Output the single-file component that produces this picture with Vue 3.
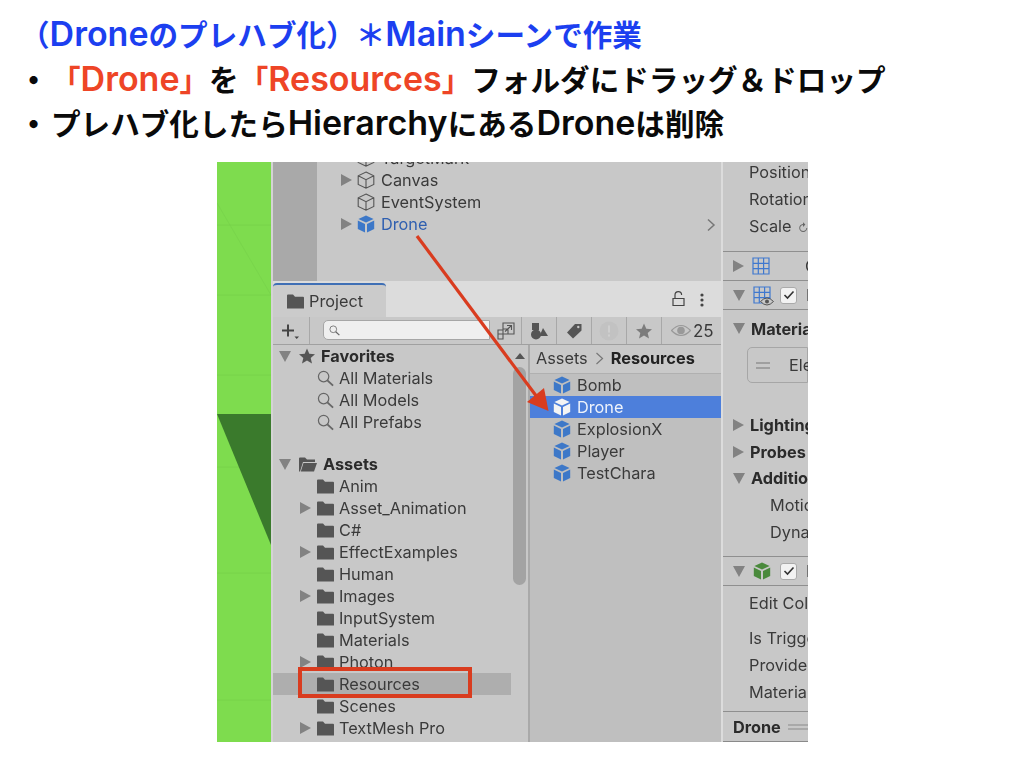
<script setup>
const hierarchy = [
  { name: 'TargetMark' },
  { name: 'Canvas', arrow: true },
  { name: 'EventSystem' },
  { name: 'Drone', arrow: true, prefab: true },
]
const favorites = ['All Materials', 'All Models', 'All Prefabs']
const folders = [
  { name: 'Anim' },
  { name: 'Asset_Animation', arrow: true },
  { name: 'C#' },
  { name: 'EffectExamples', arrow: true },
  { name: 'Human' },
  { name: 'Images', arrow: true },
  { name: 'InputSystem' },
  { name: 'Materials' },
  { name: 'Photon', arrow: true },
  { name: 'Resources', active: true },
  { name: 'Scenes' },
  { name: 'TextMesh Pro', arrow: true },
]
const assets = ['Bomb', 'Drone', 'ExplosionX', 'Player', 'TestChara']
</script>

<template>
  <div class="slide">
    <svg class="defs" width="0" height="0">
      <symbol id="cube" viewBox="0 0 18 18">
        <path d="M9 .5 16.6 4 9 7.6 1.4 4Z" />
        <path d="M.8 5.4 8 8.9V17.6L.8 14Z" />
        <path d="M17.2 5.4 10 8.9V17.6L17.2 14Z" />
      </symbol>
      <symbol id="cube-line" viewBox="0 0 18 18">
        <path d="M9 1 16.8 4.8V13.4L9 17.2 1.2 13.4V4.8ZM1.2 4.8 9 8.700 16.800 4.800M9 8.700V17.200" fill="none" stroke="#555" stroke-width="1.100" />
      </symbol>
      <symbol id="folder" viewBox="0 0 17 15">
        <path d="M0 1.500Q0 .5 1 .5H6L8 2.800H16Q17 2.800 17 3.800V14.500H0Z" fill="#555" />
      </symbol>
      <symbol id="lens" viewBox="0 0 18 18">
        <circle cx="7" cy="7" r="5.500" fill="none" stroke="#666" stroke-width="1.300" />
        <path d="M11 11 17 16.500" stroke="#666" stroke-width="2" />
      </symbol>
      <symbol id="grid" viewBox="0 0 18 18">
        <path d="M1 1H17V17H1ZM1 6.300H17M1 11.600H17M6.300 1V17M11.600 1V17" fill="none" stroke="#3f78cf" stroke-width="1.200" />
      </symbol>
    </svg>

    <header class="notes">
      <h1 class="title">（<span class="lat">Drone</span>のプレハブ化）＊<span class="lat">Main</span>シーンで作業</h1>
      <p class="step">
        <span class="dot">•</span>
        <span><em>「<span class="lat">Drone</span>」</em>を<em>「<span class="lat">Resources</span>」</em>フォルダにドラッグ＆ドロップ</span>
      </p>
      <p class="step">
        <span class="dot">•</span>
        <span>プレハブ化したら<span class="lat">Hierarchy</span>にある<span class="lat">Drone</span>は削除</span>
      </p>
    </header>

    <section class="shot">
      <div class="scene">
        <svg width="54" height="580" viewBox="0 0 54 580">
          <path d="M0 63H54M0 133H54M0 213H54M0 305H54M0 411H54M0 538H54" stroke="#76d04a" stroke-width=".8" />
          <path d="M0 41 54 133" stroke="#76d04a" stroke-width=".6" />
          <path d="M0 252H54V383Z" fill="#3a7a2c" />
        </svg>
      </div>

      <div class="editor">
        <div class="hierarchy">
          <div class="gutter"></div>
          <ul class="hier-list">
            <li v-for="row in hierarchy" :key="row.name" class="hier-row" :class="{ prefab: row.prefab }">
              <i class="tri right" :class="{ off: !row.arrow }"></i>
              <svg class="ico" :class="{ blue: row.prefab }" width="18" height="18"><use :href="row.prefab ? '#cube' : '#cube-line'" /></svg>
              <span>{{ row.name }}</span>
            </li>
          </ul>
          <svg class="chev" width="10" height="14" viewBox="0 0 10 14"><path d="M2 1.500 8 7 2 12.500" fill="none" stroke="#777" stroke-width="1.500" /></svg>
        </div>

        <div class="tabbar">
          <div class="tab">
            <svg width="17" height="15"><use href="#folder" /></svg>
            <span>Project</span>
          </div>
          <svg class="lock" width="13" height="16" viewBox="0 0 13 16"><path d="M3 7.500V4A3.300 3.300 0 0 1 9.600 4M1 7.500H12V14.500H1Z" fill="none" stroke="#444" stroke-width="1.200" /></svg>
          <svg class="dots" width="4" height="14" viewBox="0 0 4 14"><circle cx="2" cy="2" r="1.600" /><circle cx="2" cy="7" r="1.600" /><circle cx="2" cy="12" r="1.600" /></svg>
        </div>

        <div class="toolbar">
          <div class="plus">
            <svg width="20" height="18" viewBox="0 0 20 18"><path d="M1 8.500H13M7 2.500V14.500" stroke="#444" stroke-width="2" /><path d="M13.500 14.500H18L15.700 17Z" fill="#444" /></svg>
          </div>
          <div class="search">
            <svg width="11" height="11" viewBox="0 0 18 18"><use href="#lens" /></svg>
          </div>
          <div class="tool resize">
            <svg width="18" height="18" viewBox="0 0 18 18"><path d="M6 1H17V12H11V7H6ZM1 8H6V17H1ZM1 12H11M8 9.500 14 4M10 3.500H14.500V8" fill="none" stroke="#555" stroke-width="1.100" /></svg>
          </div>
          <div class="tool">
            <svg width="18" height="18" viewBox="0 0 18 18"><path d="M2 1H9V8H2Z" fill="#555" /><circle cx="6" cy="12.500" r="5" fill="#555" /><path d="M13 6 18 14H9.500Z" fill="#555" /></svg>
          </div>
          <div class="tool">
            <svg width="16" height="16" viewBox="0 0 16 16"><path d="M9 1H15.500V7.500L7 15.500 1 9.500Z" fill="#555" /><circle cx="12.300" cy="4" r="1.200" fill="#c8c8c8" /></svg>
          </div>
          <div class="tool">
            <svg width="20" height="20" viewBox="0 0 20 20"><circle cx="10" cy="10" r="9.500" fill="#c2c2c2" /><path d="M9 4.500H11V11.500H9ZM9 13.500H11V15.500H9Z" fill="#cfcfcf" /></svg>
          </div>
          <div class="tool">
            <svg width="16" height="16" viewBox="0 0 16 16"><path d="M8 .5 10.300 5.700 16 6.200 11.700 10 13 15.500 8 12.600 3 15.500 4.300 10 0 6.200 5.700 5.700Z" fill="#7c7c7c" /></svg>
          </div>
          <div class="count">
            <svg width="20" height="13" viewBox="0 0 20 13"><path d="M.5 6.500Q10-3.500 19.500 6.500 10 16.500 .5 6.500Z" fill="none" stroke="#999" stroke-width="1.200" /><circle cx="10" cy="6.500" r="3.800" fill="#999" /></svg>
            <span>25</span>
          </div>
        </div>

        <div class="browser">
          <div class="tree">
            <div class="row head">
              <i class="tri down"></i>
              <svg class="star" width="16" height="16" viewBox="0 0 16 16"><path d="M8 .5 10.300 5.700 16 6.200 11.700 10 13 15.500 8 12.600 3 15.500 4.300 10 0 6.200 5.700 5.700Z" fill="#555" /></svg>
              <span>Favorites</span>
            </div>
            <div v-for="item in favorites" :key="item" class="row child">
              <svg class="ico" width="17" height="17"><use href="#lens" /></svg>
              <span>{{ item }}</span>
            </div>
            <div class="row head assets">
              <i class="tri down"></i>
              <svg class="star" width="18" height="15" viewBox="0 0 18 15"><path d="M0 1.500Q0 .5 1 .5H6L8 2.500H16V5H4L1 14.500H0ZM4.500 6H18L15 14.500H1.800Z" fill="#555" /></svg>
              <span>Assets</span>
            </div>
            <div v-for="item in folders" :key="item.name" class="row child" :class="{ active: item.active }">
              <i v-if="item.arrow" class="tri right tree-tri"></i>
              <svg class="ico" width="17" height="15"><use href="#folder" /></svg>
              <span>{{ item.name }}</span>
            </div>
          </div>

          <div class="scroll">
            <i class="tri up"></i>
            <div class="thumb"></div>
          </div>

          <div class="files">
            <div class="crumbs">
              <span>Assets</span>
              <svg width="9" height="13" viewBox="0 0 9 13"><path d="M1.500 1 7.500 6.500 1.500 12" fill="none" stroke="#777" stroke-width="1.200" /></svg>
              <b>Resources</b>
            </div>
            <div v-for="name in assets" :key="name" class="file" :class="{ picked: name === 'Drone' }">
              <svg class="ico blue" width="18" height="18"><use href="#cube" /></svg>
              <span>{{ name }}</span>
            </div>
          </div>
        </div>
      </div>

      <aside class="inspector">
        <div class="block transform">
          <div class="field">Position</div>
          <div class="field">Rotation</div>
          <div class="field">Scale <small>↻</small></div>
        </div>
        <div class="comp">
          <i class="tri right"></i>
          <svg class="comp-ico" width="18" height="18"><use href="#grid" /></svg>
          <span class="filter far">Cube (Mesh Filter)</span>
        </div>
        <div class="comp">
          <i class="tri down"></i>
          <span class="eye-wrap">
            <svg class="comp-ico" width="18" height="18"><use href="#grid" /></svg>
            <svg class="eye" width="14" height="9" viewBox="0 0 14 9"><path d="M.5 4.500Q7-2.500 13.500 4.500 7 11.500 .5 4.500Z" fill="#c8c8c8" stroke="#555" /><circle cx="7" cy="4.500" r="2" fill="#555" /></svg>
          </span>
          <span class="check">
            <svg width="12" height="10" viewBox="0 0 12 10"><path d="M1.500 5 4.500 8 10.500 1.500" fill="none" stroke="#333" stroke-width="1.600" /></svg>
          </span>
          <span class="filter">Mesh Renderer</span>
        </div>
        <div class="block material">
          <div class="sub"><i class="tri down"></i><b>Materials</b></div>
          <div class="mat-box">
            <svg width="14" height="7" viewBox="0 0 14 7"><path d="M0 1H14M0 6H14" stroke="#777" /></svg>
            <span>Element 0</span>
          </div>
          <div class="sub lighting"><i class="tri right"></i><b>Lighting</b></div>
          <div class="sub"><i class="tri right"></i><b>Probes</b></div>
          <div class="sub"><i class="tri down"></i><b>Additional Settings</b></div>
          <div class="field deep">Motion Vectors</div>
          <div class="field deep">Dynamic Occlusion</div>
        </div>
        <div class="comp">
          <i class="tri down"></i>
          <svg class="comp-ico green" width="18" height="18"><use href="#cube" /></svg>
          <span class="check">
            <svg width="12" height="10" viewBox="0 0 12 10"><path d="M1.500 5 4.500 8 10.500 1.500" fill="none" stroke="#333" stroke-width="1.600" /></svg>
          </span>
          <span class="filter">Box Collider</span>
        </div>
        <div class="block collider">
          <div class="field edit">Edit Collider</div>
          <div class="field">Is Trigger</div>
          <div class="field">Provides Contacts</div>
          <div class="field">Material</div>
        </div>
        <div class="footer">
          <b>Drone</b>
          <svg width="24" height="6" viewBox="0 0 24 6"><path d="M0 1H24M0 5H24" stroke="#8a8a8a" /></svg>
        </div>
      </aside>

      <svg class="marks" width="591" height="580" viewBox="217 162 591 580">
        <path d="M417 236 537 397" stroke="#d93c1f" stroke-width="3.200" fill="none" />
        <path d="M548.500 411 527 402 544 388Z" fill="#d93c1f" />
        <rect x="300" y="669" width="170" height="27" fill="none" stroke="#d93c1f" stroke-width="4" />
      </svg>
    </section>
  </div>
</template>

<style scoped>
.slide {
  width: 1024px;
  height: 768px;
  overflow: hidden;
  background: #fff;
  font-family: Inter, "Liberation Sans", "Noto Sans CJK JP", sans-serif;
}
.defs {
  display: block;
  height: 0;
}
.notes {
  height: 162px;
  box-sizing: border-box;
  padding: 12px 0 0 18px;
}
.title,
.step {
  margin: 0;
  height: 44.500px;
  line-height: 44.500px;
  font-size: 29.600px;
  font-weight: 600;
  white-space: nowrap;
  font-family: Inter, "Noto Sans CJK JP", sans-serif;
}
.lat {
  font-size: 34px;
}
.title {
  padding-left: 2px;
  color: #1c3ff0;
}
.step {
  display: flex;
  color: #0a0a0a;
}
.step em {
  font-style: normal;
  color: #ee4526;
}
.dot {
  width: 33px;
  padding-left: 9px;
  box-sizing: border-box;
  font-size: 26px;
}

.shot {
  position: relative;
  display: flex;
  width: 591px;
  height: 580px;
  margin-left: 217px;
  overflow: hidden;
  background: #c8c8c8;
  color: #3a3a3a;
  font-size: 16.300px;
  filter: blur(0.45px);
}
.scene {
  flex: 0 0 54px;
  background: #7edc4e;
  border-right: 2px solid #d4d4d4;
}
.scene svg {
  display: block;
}
.editor {
  flex: 0 0 448px;
  display: flex;
  flex-direction: column;
}

.hierarchy {
  position: relative;
  display: flex;
  height: 119px;
  overflow: hidden;
}
.gutter {
  width: 44px;
  background: #a9a9a9;
}
.hier-list {
  list-style: none;
  margin: -15px 0 0;
  padding: 0 0 0 24px;
}
.hier-row {
  display: flex;
  align-items: center;
  height: 22px;
}
.hier-row .ico {
  margin: 0 6px 0 5px;
}
.hier-row.prefab {
  color: #2f5fb0;
}
.chev {
  position: absolute;
  right: 5px;
  top: 56px;
}

.tri {
  display: inline-block;
  flex: none;
  width: 0;
  height: 0;
  border-style: solid;
  border-color: transparent;
}
.tri.right {
  border-width: 6px 0 6px 11px;
  border-left-color: #828282;
}
.tri.down {
  border-width: 11px 6px 0;
  border-top-color: #828282;
}
.tri.up {
  border-width: 0 5px 6px;
  border-bottom-color: #555;
}
.tri.off {
  visibility: hidden;
}
.blue {
  fill: #3d78c8;
}
.green {
  fill: #4a8a3c;
}

.tabbar {
  display: flex;
  align-items: flex-end;
  height: 36px;
  background: #dcdcdc;
}
.tab {
  display: flex;
  align-items: center;
  gap: 5px;
  width: 113px;
  height: 34px;
  box-sizing: border-box;
  padding-left: 14px;
  background: #cbcbcb;
  border-top: 2px solid #3f6fb5;
  border-radius: 4px 4px 0 0;
}
.lock {
  margin: 0 0 10px auto;
}
.dots {
  margin: 0 17px 10px 15px;
  fill: #444;
}

.toolbar {
  display: flex;
  height: 28px;
  box-sizing: border-box;
  border-bottom: 1px solid #a0a0a0;
  background: #c8c8c8;
}
.plus {
  width: 37px;
  display: flex;
  align-items: center;
  justify-content: center;
  border-right: 1px solid #a8a8a8;
  box-sizing: border-box;
}
.search {
  width: 167px;
  height: 20px;
  margin: 3px 0 0 13px;
  display: flex;
  align-items: center;
  padding-left: 5px;
  box-sizing: border-box;
  background: #efefef;
  border: 1px solid #a6a6a6;
  border-radius: 5px 0 0 5px;
}
.tool {
  width: 35px;
  display: flex;
  align-items: center;
  justify-content: center;
  box-sizing: border-box;
  border-right: 1px solid #a8a8a8;
}
.tool.resize {
  width: 32px;
}
.count {
  display: flex;
  align-items: center;
  gap: 2px;
  padding-left: 9px;
  font-size: 17px;
}

.browser {
  flex: 1;
  display: flex;
  min-height: 0;
}
.tree {
  flex: 0 0 238px;
}
.row {
  position: relative;
  display: flex;
  align-items: center;
  height: 22px;
}
.head {
  padding-left: 6px;
  font-weight: 700;
  color: #2b2b2b;
}
.head .tri {
  margin-right: 8px;
}
.head .star {
  margin-right: 6px;
}
.assets {
  margin-top: 20px;
}
.child {
  padding-left: 44px;
}
.child .ico {
  margin-right: 5px;
}
.child.active {
  background: #aeaeae;
}
.tree-tri {
  position: absolute;
  left: 27px;
}
.scroll {
  flex: 0 0 19px;
  display: flex;
  flex-direction: column;
  align-items: center;
  padding-top: 8px;
  box-sizing: border-box;
  border-right: 2px solid #a9a9a9;
}
.thumb {
  width: 13px;
  height: 218px;
  margin-top: 8px;
  background: #a3a3a3;
  border-radius: 7px;
}
.files {
  flex: 1;
  background: #bfbfbf;
}
.crumbs {
  display: flex;
  align-items: center;
  gap: 7px;
  height: 26px;
  padding: 0 0 2px 6px;
  box-sizing: content-box;
  background: #c9c9c9;
  border-bottom: 1px solid #b0b0b0;
}
.crumbs b {
  color: #222;
}
.file {
  display: flex;
  align-items: center;
  gap: 6px;
  height: 22px;
  padding-left: 23px;
}
.file.picked {
  background: #4d7fdb;
  color: #eef3fb;
}
.file.picked .ico {
  fill: #f4f4f4;
}

.inspector {
  flex: 1;
  min-width: 0;
  overflow: hidden;
  white-space: nowrap;
  border-left: 2px solid #dcdcdc;
}
.block {
  display: flow-root;
  border-bottom: 1px solid #8f8f8f;
  box-sizing: border-box;
}
.transform {
  height: 90px;
}
.transform .field:first-child {
  margin-top: -3px;
}
.field {
  height: 27px;
  line-height: 27px;
  padding-left: 26px;
}
.field small {
  margin-left: 2px;
  font-size: 11px;
  color: #666;
}
.deep {
  padding-left: 47px;
}
.comp {
  display: flex;
  align-items: center;
  height: 29px;
  box-sizing: border-box;
  padding-left: 10px;
  border-bottom: 1px solid #8f8f8f;
}
.comp .tri {
  margin-right: 8px;
}
.comp-ico {
  flex: none;
  margin-right: 9px;
}
.eye-wrap {
  position: relative;
  display: flex;
}
.eye {
  position: absolute;
  left: 7px;
  top: 11px;
}
.check {
  flex: none;
  display: flex;
  align-items: center;
  justify-content: center;
  width: 17px;
  height: 17px;
  margin-right: 9px;
  background: #f2f2f2;
  border: 1px solid #aaa;
  border-radius: 3px;
  box-sizing: border-box;
}
.filter {
  color: #3a3a3a;
}
.filter.far {
  margin-left: 26px;
}
.material {
  height: 247px;
}
.sub {
  display: flex;
  align-items: center;
  height: 26.500px;
  padding-left: 10px;
  color: #2b2b2b;
}
.sub .tri {
  margin-right: 6px;
}
.material > .sub:first-child {
  height: 37px;
}
.mat-box {
  display: flex;
  align-items: center;
  gap: 19px;
  height: 36px;
  margin-left: 24px;
  padding-left: 8px;
  box-sizing: border-box;
  border: 1px solid #a6a6a6;
  border-radius: 5px 0 0 5px;
}
.mat-box svg {
  flex: none;
}
.lighting {
  margin-top: 29px;
}
.collider {
  height: 126px;
}
.edit {
  margin: 4px 0 8px;
}
.footer {
  display: flex;
  align-items: center;
  gap: 7px;
  height: 30px;
  padding-left: 10px;
  color: #2b2b2b;
  box-sizing: border-box;
  border-bottom: 1px solid #8a8a8a;
}
.footer svg {
  flex: none;
}

.marks {
  position: absolute;
  left: 0;
  top: 0;
  pointer-events: none;
}
</style>
